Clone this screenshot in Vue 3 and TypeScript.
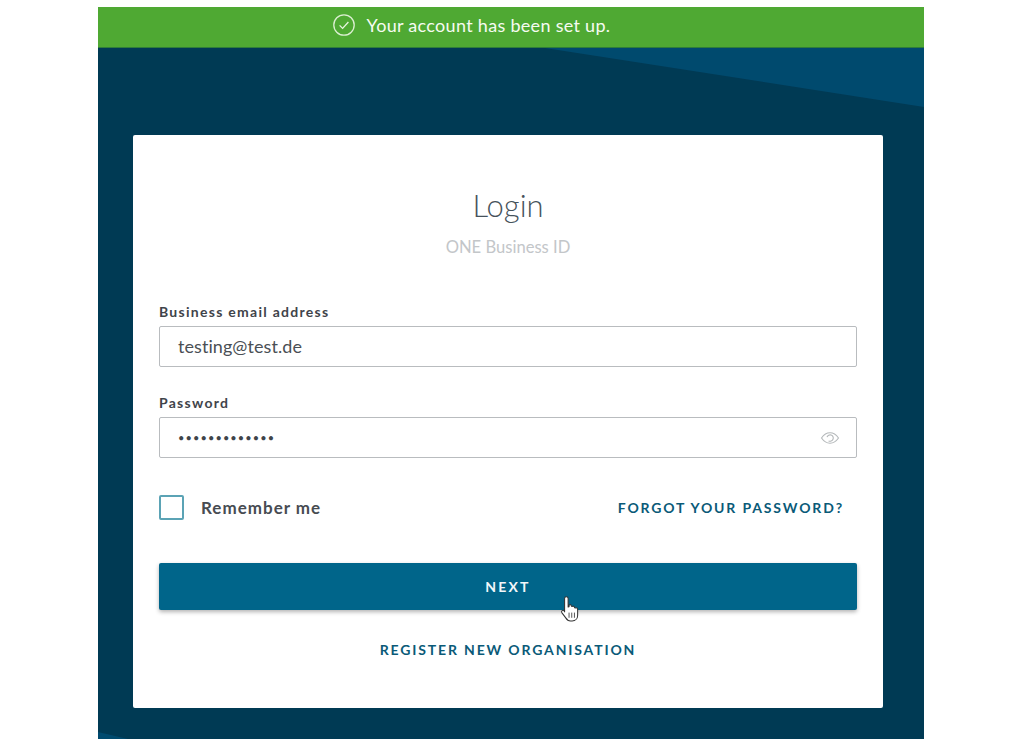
<script setup lang="ts">
const email = 'testing@test.de'
const dots = '•'.repeat(13)
</script>

<template>
  <div class="page">
    <main class="frame">
      <div class="banner">
        <svg class="check" width="24" height="24" viewBox="0 0 24 24" fill="none" aria-hidden="true">
          <circle cx="12" cy="12" r="10.2" stroke="#dcefd2" stroke-width="1.3" />
          <path d="M7.6 12.4l3 3 5.8-6.4" stroke="#e8f5e0" stroke-width="1.3" fill="none" />
        </svg>
        <span>Your account has been set up.</span>
      </div>
      <div class="panel">
        <div class="wedge-top"></div>
        <div class="wedge-bottom"></div>
        <section class="card">
          <h1 class="title">Login</h1>
          <p class="subtitle">ONE Business ID</p>

          <div class="field first">
            <label class="label">Business email address</label>
            <div class="input email">{{ email }}</div>
          </div>
          <div class="field second">
            <label class="label">Password</label>
            <div class="input pw">
              <span class="dots">{{ dots }}</span>
              <svg width="20" height="14" viewBox="0 0 20 14" fill="none" aria-hidden="true">
                <path d="M1.5 7C4 3.4 7 1.8 10 1.8S16 3.4 18.5 7C16 10.6 13 12.2 10 12.2S4 10.6 1.5 7Z" stroke="#b4b8ba" stroke-width="1.1" />
                <path d="M7 6.2A3.2 3.2 0 1 1 8.6 9.9" stroke="#b4b8ba" stroke-width="1.1" />
              </svg>
            </div>
          </div>

          <div class="options">
            <div class="remember">
              <span class="box"></span>
              <span>Remember me</span>
            </div>
            <a class="link">FORGOT YOUR PASSWORD?</a>
          </div>

          <div class="next-wrap">
            <button class="next" type="button">NEXT</button>
            <svg class="cursor" width="21" height="29" viewBox="0 0 20 28" aria-hidden="true">
              <path d="M6 1.6c1 0 1.7.8 1.7 1.8v8.2l.9-.2V9.6c1.5-.8 2.3.1 2.3 1.3l.8.1c1.4-.7 2.2.2 2.2 1.300l.8.2c1.400-.5 2.200.4 2.200 1.600v5.400c0 2.900-2 5.500-5.300 5.500H10c-2.300 0-3.500-1.100-4.600-2.900L1.600 17c-.8-1.500.9-2.900 2.200-1.700l.5 1V3.400c0-1 .7-1.800 1.700-1.800Z" fill="#fff" stroke="#333" stroke-width="1" stroke-linejoin="round" />
              <path d="M8.600 17v5M11.200 17v5M13.800 17v5" stroke="#333" stroke-width=".8" />
            </svg>
          </div>

          <a class="link register">REGISTER NEW ORGANISATION</a>
        </section>
      </div>
    </main>
  </div>
</template>

<style>
html, body { margin: 0; background: #fff; }
</style>

<style scoped>
.page {
  width: 1024px;
  height: 747px;
  padding: 7px 100px 8px 98px;
  box-sizing: border-box;
  font-family: "Lato", "Open Sans", sans-serif;
  overflow: hidden;
}
.frame {
  display: flex;
  flex-direction: column;
  height: 732px;
}
.banner {
  height: 41px;
  flex: none;
  background: #4fa933;
  border-bottom: 1px solid #2f7d3a;
  box-sizing: border-box;
  display: flex;
  align-items: center;
  justify-content: center;
  gap: 11px;
  padding-right: 80px;
  padding-bottom: 4px;
  color: #f6fbf1;
  font-size: 18px;
  letter-spacing: 0.3px;
}
.check { flex: none; }
.panel {
  position: relative;
  flex: 1;
  background: #003a54;
  padding: 87px 41px 31px 35px;
  overflow: hidden;
}
.wedge-top {
  position: absolute;
  inset: 0;
  background: #004a6e;
  clip-path: polygon(447px 0, 826px 0, 826px 59px);
}
.wedge-bottom {
  position: absolute;
  inset: 0;
  background: #004a6e;
  clip-path: polygon(0 684px, 30px 691px, 0 691px);
}
.card {
  position: relative;
  height: 573px;
  box-sizing: border-box;
  background: #fff;
  border-radius: 2px;
  padding: 51px 26px 0;
  display: flex;
  flex-direction: column;
}
.title {
  margin: 0;
  text-align: center;
  font-size: 31px;
  line-height: 38px;
  font-weight: 300;
  color: #46525b;
}
.subtitle {
  margin: 13px 0 0;
  text-align: center;
  font-size: 16.6px;
  line-height: 20px;
  color: #c3c6c9;
}
.field { display: flex; flex-direction: column; }
.field.first { margin-top: 46px; }
.field.second { margin-top: 27px; }
.label {
  font-size: 14px;
  line-height: 17px;
  font-weight: 700;
  letter-spacing: 1.28px;
  color: #3f444a;
  margin-bottom: 6px;
}
.input {
  height: 41px;
  box-sizing: border-box;
  border: 1px solid #b9bcbf;
  border-radius: 2px;
  padding: 0 16px 0 18px;
  display: flex;
  align-items: center;
  font-size: 18px;
  letter-spacing: 0.07px;
  color: #4a4f55;
}
.email { padding-bottom: 2px; }
.pw { justify-content: space-between; }
.dots {
  font-size: 11px;
  letter-spacing: 1.1px;
  color: #3f444a;
}
.options {
  margin-top: 37px;
  display: flex;
  align-items: center;
  justify-content: space-between;
  padding-right: 13px;
}
.remember {
  display: flex;
  align-items: center;
  gap: 17px;
  font-size: 17px;
  font-weight: 700;
  letter-spacing: 1px;
  color: #474c52;
}
.box {
  width: 25px;
  height: 25px;
  box-sizing: border-box;
  border: 2px solid #5ba3b5;
  border-radius: 2px;
}
.link {
  font-size: 14px;
  font-weight: 700;
  letter-spacing: 1.85px;
  color: #0a5a78;
}
.next-wrap { position: relative; margin-top: 43px; }
.next {
  display: block;
  width: 100%;
  height: 47px;
  border: 0;
  border-radius: 2px;
  background: #00658a;
  box-shadow: 0 2px 4px rgba(0, 0, 0, 0.3);
  color: #f2f7fa;
  font-family: inherit;
  font-size: 14px;
  font-weight: 700;
  letter-spacing: 2.2px;
}
.cursor {
  position: absolute;
  left: 401px;
  top: 32px;
}
.register {
  margin-top: 31px;
  text-align: center;
}
</style>
